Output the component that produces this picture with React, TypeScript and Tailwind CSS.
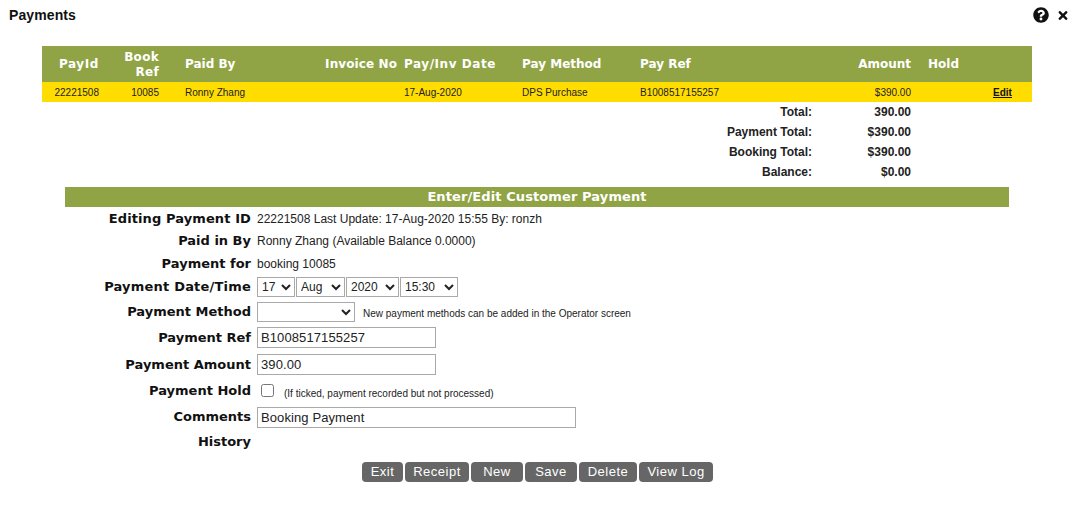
import { FaQuestionCircle, FaTimes } from "react-icons/fa";

const HEAD_FONT = "font-['DejaVu_Sans',Verdana,sans-serif]";
const COLS = "grid-cols-[57px_60px_141px_97px_125px_118px_160px_111px_69px_52px]";

const TOTALS = [
  ["Total:", "390.00"],
  ["Payment Total:", "$390.00"],
  ["Booking Total:", "$390.00"],
  ["Balance:", "$0.00"],
];

const inputCls = "h-[21px] border border-[#a9a9a9] bg-white px-[3px] text-[13px] tracking-[0.1px] text-[#222] outline-none";
const selectCls = "h-[20px] border border-[#a9a9a9] bg-white text-[12px] text-[#222] rounded-none";

function Row({ label, h, wide, children }: { label: string; h: string; wide?: string; children?: React.ReactNode }) {
  return (
    <div className={`grid grid-cols-[186px_1fr] gap-[6px] items-center ${h}`}>
      <div className={`${HEAD_FONT} text-right text-[13px] font-bold text-[#111] ${wide ?? ""}`}>{label}</div>
      <div className="flex items-center text-[12px] text-[#222]">{children}</div>
    </div>
  );
}

export default function App() {
  return (
    <div className="w-[1079px] h-[519px] bg-white overflow-hidden font-['Liberation_Sans',Arial,sans-serif]">
      <div className="flex items-center justify-between h-[46px] pl-[9px] pr-[11px] pb-[16px]">
        <span className="text-[14px] font-bold tracking-[0.1px] text-[#111]">Payments</span>
        <div className="flex items-center gap-[9px] text-[#111]">
          <FaQuestionCircle className="w-[16px] h-[16px]" />
          <FaTimes className="w-[10px] h-[13px]" />
        </div>
      </div>

      <div className="mx-[42px] w-[990px]">
        <div className={`grid ${COLS} h-[36px] pt-[1px] items-center bg-[#90a445] ${HEAD_FONT} text-[12px] font-bold leading-[15px] text-white`}>
          <div className="text-right tracking-[0.6px]">PayId</div>
          <div className="text-right tracking-[0.3px]">Book<br />Ref</div>
          <div className="pl-[26px]">Paid By</div>
          <div className="text-right whitespace-nowrap tracking-[0.1px]">Invoice No</div>
          <div className="pl-[7px] whitespace-nowrap tracking-[0.55px]">Pay/Inv Date</div>
          <div>Pay Method</div>
          <div>Pay Ref</div>
          <div className="text-right">Amount</div>
          <div className="pl-[17px]">Hold</div>
          <div />
        </div>
        <div className={`grid ${COLS} h-[20px] items-center bg-[#ffdd00] text-[10px] text-[#222]`}>
          <div className="text-right">22221508</div>
          <div className="text-right">10085</div>
          <div className="pl-[26px]">Ronny Zhang</div>
          <div />
          <div className="pl-[7px]">17-Aug-2020</div>
          <div>DPS Purchase</div>
          <div>B1008517155257</div>
          <div className="text-right">$390.00</div>
          <div />
          <div className="pl-[13px] font-bold text-[#111] underline">Edit</div>
        </div>
        {TOTALS.map(([label, value]) => (
          <div key={label} className="grid grid-cols-[770px_99px] h-[20px] items-center text-[12px] font-bold text-[#222]">
            <div className="text-right">{label}</div>
            <div className="text-right">{value}</div>
          </div>
        ))}
      </div>

      <div className="ml-[65px] mt-[5px] w-[944px]">
        <div className={`h-[20px] flex items-center justify-center bg-[#90a445] ${HEAD_FONT} text-[13px] font-bold tracking-[0.1px] text-white`}>
          Enter/Edit Customer Payment
        </div>
        <Row label="Editing Payment ID" h="h-[23px]" wide="tracking-[0.1px]">22221508 Last Update: 17-Aug-2020 15:55 By: ronzh</Row>
        <Row label="Paid in By" h="h-[22px]">Ronny Zhang (Available Balance 0.0000)</Row>
        <Row label="Payment for" h="h-[23px]">booking 10085</Row>
        <Row label="Payment Date/Time" h="h-[24px]" wide="tracking-[0.2px]">
          <div className="flex gap-[1px]">
            <select className={`${selectCls} w-[38px]`} defaultValue="17"><option>17</option></select>
            <select className={`${selectCls} w-[49px]`} defaultValue="Aug"><option>Aug</option></select>
            <select className={`${selectCls} w-[53px]`} defaultValue="2020"><option>2020</option></select>
            <select className={`${selectCls} w-[58px]`} defaultValue="15:30"><option>15:30</option></select>
          </div>
        </Row>
        <Row label="Payment Method" h="h-[25px]">
          <select className={`${selectCls} w-[98px]`}><option></option></select>
          <span className="ml-[8px] mt-[3px] text-[10px]">New payment methods can be added in the Operator screen</span>
        </Row>
        <Row label="Payment Ref" h="h-[27px]">
          <input className={`${inputCls} w-[179px]`} defaultValue="B1008517155257" />
        </Row>
        <Row label="Payment Amount" h="h-[27px]">
          <input className={`${inputCls} w-[179px]`} defaultValue="390.00" />
        </Row>
        <Row label="Payment Hold" h="h-[26px]">
          <input type="checkbox" className="ml-[4px] mb-[2px] w-[13px] h-[13px]" />
          <span className="ml-[10px] mt-[4px] text-[10px]">(If ticked, payment recorded but not processed)</span>
        </Row>
        <Row label="Comments" h="h-[26px]">
          <input className={`${inputCls} w-[319px]`} defaultValue="Booking Payment" />
        </Row>
        <Row label="History" h="h-[24px]" />
      </div>

      <div className="ml-[362px] mt-[8px] flex gap-[2px] text-[13px] text-white">
        {[
          ["Exit", "w-[41px]"],
          ["Receipt", "w-[64px]"],
          ["New", "w-[52px]"],
          ["Save", "w-[52px]"],
          ["Delete", "w-[58px]"],
          ["View Log", "w-[74px]"],
        ].map(([name, w]) => (
          <button key={name} className={`${w} h-[20px] rounded-[4px] bg-[#666666] text-center tracking-[0.5px]`}>
            {name}
          </button>
        ))}
      </div>
    </div>
  );
}
